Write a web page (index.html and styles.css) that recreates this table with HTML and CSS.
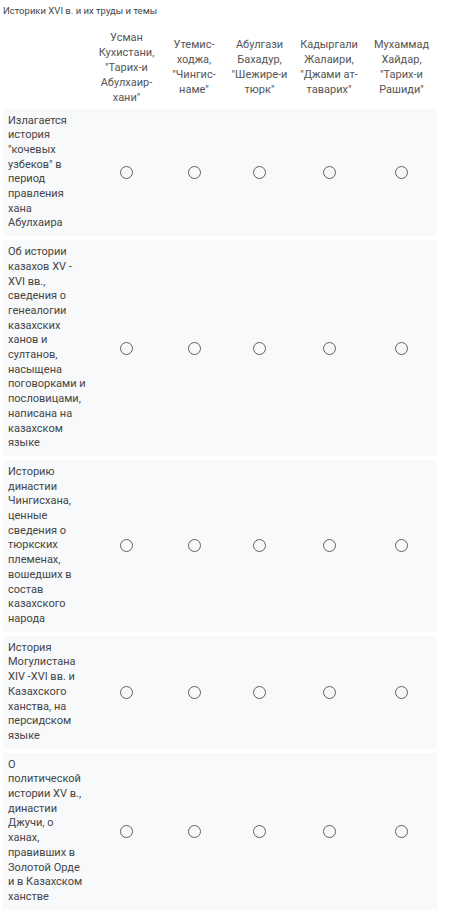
FILE: index.html
```html
<!DOCTYPE html>
<html lang="ru">
<head>
<meta charset="utf-8">
<title>Историки XVI в.</title>
<link rel="stylesheet" href="styles.css">
</head>
<body>
<div class="page">
  <div class="title">Историки XVI в. и их труды и темы</div>
  <div class="grid">
    <div class="row head">
      <div class="cell lbl"></div>
      <div class="cell hc">Усман Кухистани, "Тарих-и Абулхаир-хани"</div>
      <div class="cell hc">Утемис-ходжа, "Чингис-наме"</div>
      <div class="cell hc">Абулгази Бахадур, "Шежире-и тюрк"</div>
      <div class="cell hc">Кадыргали Жалаири, "Джами ат-таварих"</div>
      <div class="cell hc">Мухаммад Хайдар, "Тарих-и Рашиди"</div>
    </div>
    <div class="row item">
      <div class="cell lbl">Излагается история "кочевых узбеков" в период правления хана Абулхаира</div>
      <div class="cell rc"><span class="radio"></span></div>
      <div class="cell rc"><span class="radio"></span></div>
      <div class="cell rc"><span class="radio"></span></div>
      <div class="cell rc"><span class="radio"></span></div>
      <div class="cell rc"><span class="radio"></span></div>
    </div>
    <div class="row item">
      <div class="cell lbl">Об истории казахов XV - XVI вв., сведения о генеалогии казахских ханов и султанов, насыщена поговорками и пословицами, написана на казахском языке</div>
      <div class="cell rc"><span class="radio"></span></div>
      <div class="cell rc"><span class="radio"></span></div>
      <div class="cell rc"><span class="radio"></span></div>
      <div class="cell rc"><span class="radio"></span></div>
      <div class="cell rc"><span class="radio"></span></div>
    </div>
    <div class="row item">
      <div class="cell lbl">Историю династии Чингисхана, ценные сведения о тюркских племенах, вошедших в состав казахского народа</div>
      <div class="cell rc"><span class="radio"></span></div>
      <div class="cell rc"><span class="radio"></span></div>
      <div class="cell rc"><span class="radio"></span></div>
      <div class="cell rc"><span class="radio"></span></div>
      <div class="cell rc"><span class="radio"></span></div>
    </div>
    <div class="row item">
      <div class="cell lbl">История Могулистана XIV -XVI вв. и Казахского ханства, на персидском языке</div>
      <div class="cell rc"><span class="radio"></span></div>
      <div class="cell rc"><span class="radio"></span></div>
      <div class="cell rc"><span class="radio"></span></div>
      <div class="cell rc"><span class="radio"></span></div>
      <div class="cell rc"><span class="radio"></span></div>
    </div>
    <div class="row item">
      <div class="cell lbl">О политической истории XV в., династии Джучи, о ханах, правивших в Золотой Орде и в Казахском ханстве</div>
      <div class="cell rc"><span class="radio"></span></div>
      <div class="cell rc"><span class="radio"></span></div>
      <div class="cell rc"><span class="radio"></span></div>
      <div class="cell rc"><span class="radio"></span></div>
      <div class="cell rc"><span class="radio"></span></div>
    </div>
  </div>
</div>
</body>
</html>
```

FILE: styles.css
```css
html, body {
  margin: 0;
  padding: 0;
  background: #ffffff;
}

body {
  font-family: Roboto, "Noto Sans", "Liberation Sans", sans-serif;
  color: #454545;
}

.page {
  padding: 4px 0 0 3px;
}

.title {
  font-size: 9.5px;
  line-height: 14px;
  color: #454545;
  margin-bottom: 11.5px;
}

.grid {
  display: flex;
  flex-direction: column;
  gap: 4px;
  width: 434px;
}

.row {
  display: grid;
  grid-template-columns: 89px 69px 66px 65px 74px 71px;
  font-size: 11px;
}

.head {
  line-height: 15px;
  color: #555555;
}

.item {
  background: #f8f9fa;
  line-height: 14.7px;
}

.item .lbl {
  padding: 5px 6px 5px 5px;
}

.cell {
  display: flex;
  align-items: center;
}

.hc {
  justify-content: center;
  text-align: center;
  padding: 0 3px;
}

.rc {
  justify-content: center;
}

.radio {
  display: block;
  width: 13px;
  height: 13px;
  box-sizing: border-box;
  border: 1.6px solid #616161;
  border-radius: 50%;
}
```
